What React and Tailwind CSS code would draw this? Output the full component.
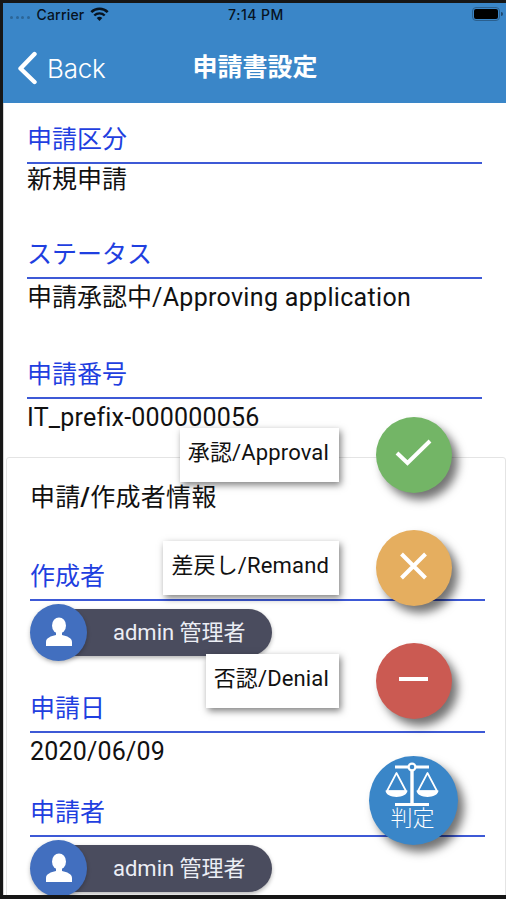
import { clsx } from 'clsx';

const actions = [
  { label: '承認/Approval', width: 'w-[159px]', color: 'bg-[#73b566]', icon: 'M16 36 L26.5 46 L49 24' },
  { label: '差戻し/Remand', width: 'w-[176px]', color: 'bg-[#e5ae5f]', icon: 'M20.5 24 L44.5 48 M44.5 24 L20.5 48' },
  { label: '否認/Denial', width: 'w-[133px]', color: 'bg-[#cb5a52]', icon: 'M18 36 H47' },
];

function StatusBar() {
  return (
    <div className="grid h-[22px] grid-cols-3 items-center font-['Inter','Liberation_Sans',sans-serif] text-[14px] font-medium text-[#07131f]">
      <div className="flex items-center pl-[7px]">
        <div className="mt-[7px] flex gap-[2.5px]">
          {[0, 1, 2, 3].map(i => (
            <span key={i} className="h-[3px] w-[3px] rounded-full bg-[#2c6697]" />
          ))}
        </div>
        <span className="ml-[7px] text-[14px] tracking-[0.2px]">Carrier</span>
        <svg className="ml-[6px]" width="19" height="14" viewBox="0 0 19 14" fill="none" stroke="currentColor">
          <path d="M1.3 5.2 A11.6 11.6 0 0 1 17.7 5.2" strokeWidth="2.6" />
          <path d="M4.3 8.5 A7.4 7.4 0 0 1 14.7 8.5" strokeWidth="2.4" />
          <path d="M9.5 14 L6.7 11 A4 4 0 0 1 12.3 11 Z" fill="currentColor" stroke="none" />
        </svg>
      </div>
      <div className="pl-[3px] text-center tracking-[0.5px]">7:14 PM</div>
      <div className="flex items-center justify-end pr-[3px]">
        <div className="h-[14px] w-[28px] rounded-[4px] border border-[#2a5f8e] p-px">
          <div className="h-full rounded-[2px] bg-black" />
        </div>
        <span className="ml-px h-[4px] w-[2px] rounded-r-full bg-[#1f4a70]" />
      </div>
    </div>
  );
}

function Header() {
  return (
    <header className="h-[100px] shrink-0 bg-[#3a86c8]">
      <StatusBar />
      <div className="grid h-[85px] grid-cols-3 items-center text-white">
        <div className="flex items-center pl-[14px]">
          <svg width="20" height="34" viewBox="0 0 20 34" fill="none" stroke="currentColor" strokeWidth="4.4" strokeLinecap="round" strokeLinejoin="round">
            <path d="M17.5 3 L3.5 17.5 L17.5 31" />
          </svg>
          <span className="ml-[10px] pt-px font-['Inter','Liberation_Sans',sans-serif] text-[26px] font-light tracking-[-0.2px]">Back</span>
        </div>
        <h1 className="pl-px text-center text-[25px] font-bold whitespace-nowrap">申請書設定</h1>
      </div>
    </header>
  );
}

function Field({ label, className, children }) {
  return (
    <section className={className}>
      <div className="h-[40px] border-b-2 border-[#3d59d6] text-[25px] leading-[31px] text-[#1f3fe0]">{label}</div>
      {children}
    </section>
  );
}

function UserPill({ name }) {
  return (
    <div className="flex h-[62px] w-[242px] items-center">
      <div className="z-10 flex h-[57px] w-[57px] shrink-0 items-center justify-center rounded-full bg-[#426fbf] shadow-[0_2px_4px_rgba(0,0,0,0.25)]">
        <svg width="26" height="30" viewBox="0 0 26 30" fill="white">
          <ellipse cx="13" cy="8.5" rx="7" ry="8" />
          <path d="M10 14 H16 V18 C21 19 26 21 26 25 V29 H0 V25 C0 21 5 19 10 18 Z" />
        </svg>
      </div>
      <div className="-ml-[40px] flex h-[47px] flex-1 items-center rounded-r-full bg-[#4a4c5e] pt-[2px] pl-[66px] text-[22px] text-[#eceef5] shadow-[0_2px_4px_rgba(0,0,0,0.3)]">
        {name}
      </div>
    </div>
  );
}

function ScaleIcon() {
  return (
    <svg className="mr-[4px]" width="54" height="45" viewBox="0 0 54 45" fill="none" stroke="white">
      <path d="M10 5 H44 M10 42.5 H44" strokeWidth="3" />
      <path d="M27 8 V42" strokeWidth="3.4" />
      <circle cx="27" cy="5" r="3.4" fill="#3a86c8" strokeWidth="2.2" />
      <path d="M11.5 11 L2 29 H21 Z M42.5 11 L33 29 H52 Z" strokeWidth="1.7" strokeLinejoin="round" />
      <path d="M0.5 28.5 H22.5 C22 37 1 37 0.5 28.5 Z M31.5 28.5 H53.5 C53 37 32 37 31.5 28.5 Z" fill="white" stroke="none" />
    </svg>
  );
}

function ActionMenu() {
  return (
    <div className="absolute top-[417px] right-[49px] z-20 flex flex-col items-end">
      {actions.map(action => (
        <div key={action.label} className="flex h-[113px] items-start pr-[6px]">
          <div className={clsx('mt-[11px] flex h-[54px] items-center bg-white pr-[10px] pb-[6px] text-[22px] tracking-[0.15px] text-[#111] justify-end whitespace-nowrap shadow-[2px_3px_7px_rgba(0,0,0,0.5)]', action.width)}>
            {action.label}
          </div>
          <button className={clsx('ml-[37px] flex h-[76px] w-[76px] items-center justify-center rounded-full shadow-[6px_7px_10px_rgba(0,0,0,0.55)]', action.color)}>
            <svg width="66" height="76" viewBox="0 0 66 76" fill="none" stroke="white" strokeWidth="4">
              <path d={action.icon} />
            </svg>
          </button>
        </div>
      ))}
      <button className="flex h-[89px] w-[89px] flex-col items-center rounded-full bg-[#3a86c8] pt-[6px] text-[22px] leading-[23px] text-white shadow-[6px_7px_10px_rgba(0,0,0,0.55)]">
        <ScaleIcon />
        <span className="pr-[2px] font-light">判定</span>
      </button>
    </div>
  );
}

export default function App() {
  return (
    <div className="relative h-[900px] w-[507px] bg-white font-['Roboto','Noto_Sans_CJK_JP',sans-serif] text-[#111]">
      <div className="flex h-[899px] w-[506px] flex-col overflow-hidden border-t-[3px] border-b-4 border-l-[3px] border-[#161616]">
        <Header />
        <main className="flex-1 overflow-hidden border-l border-[#d5d5d5] text-[25px] leading-[30px]">
          <div className="pr-[24px] pl-[23px]">
            <Field label="申請区分" className="h-[136px] pt-[21px]">
              <p className="pt-px">新規申請</p>
            </Field>
            <Field label="ステータス" className="h-[120px]">
              <p className="pt-[4px] whitespace-nowrap">
                申請承認中<span className="tracking-[0.32px]">/Approving application</span>
              </p>
            </Field>
            <Field label="申請番号" className="h-[98px]">
              <p className="pt-[4px] tracking-[0.2px]">IT_prefix-000000056</p>
            </Field>
          </div>
          <div className="ml-[2px] h-[500px] rounded-t-[3px] border border-[#e4e4e4] pr-[20px] pl-[23px]">
            <h2 className="h-[103px] pt-[25px] tracking-[0.3px]">
              申請<b>/</b>作成者情報
            </h2>
            <Field label="作成者" className="h-[132px]">
              <UserPill name="admin 管理者" />
            </Field>
            <Field label="申請日" className="h-[104px]">
              <p className="pt-[4px] tracking-[0.2px]">2020/06/09</p>
            </Field>
            <Field label="申請者">
              <UserPill name="admin 管理者" />
            </Field>
          </div>
        </main>
      </div>
      <ActionMenu />
    </div>
  );
}
